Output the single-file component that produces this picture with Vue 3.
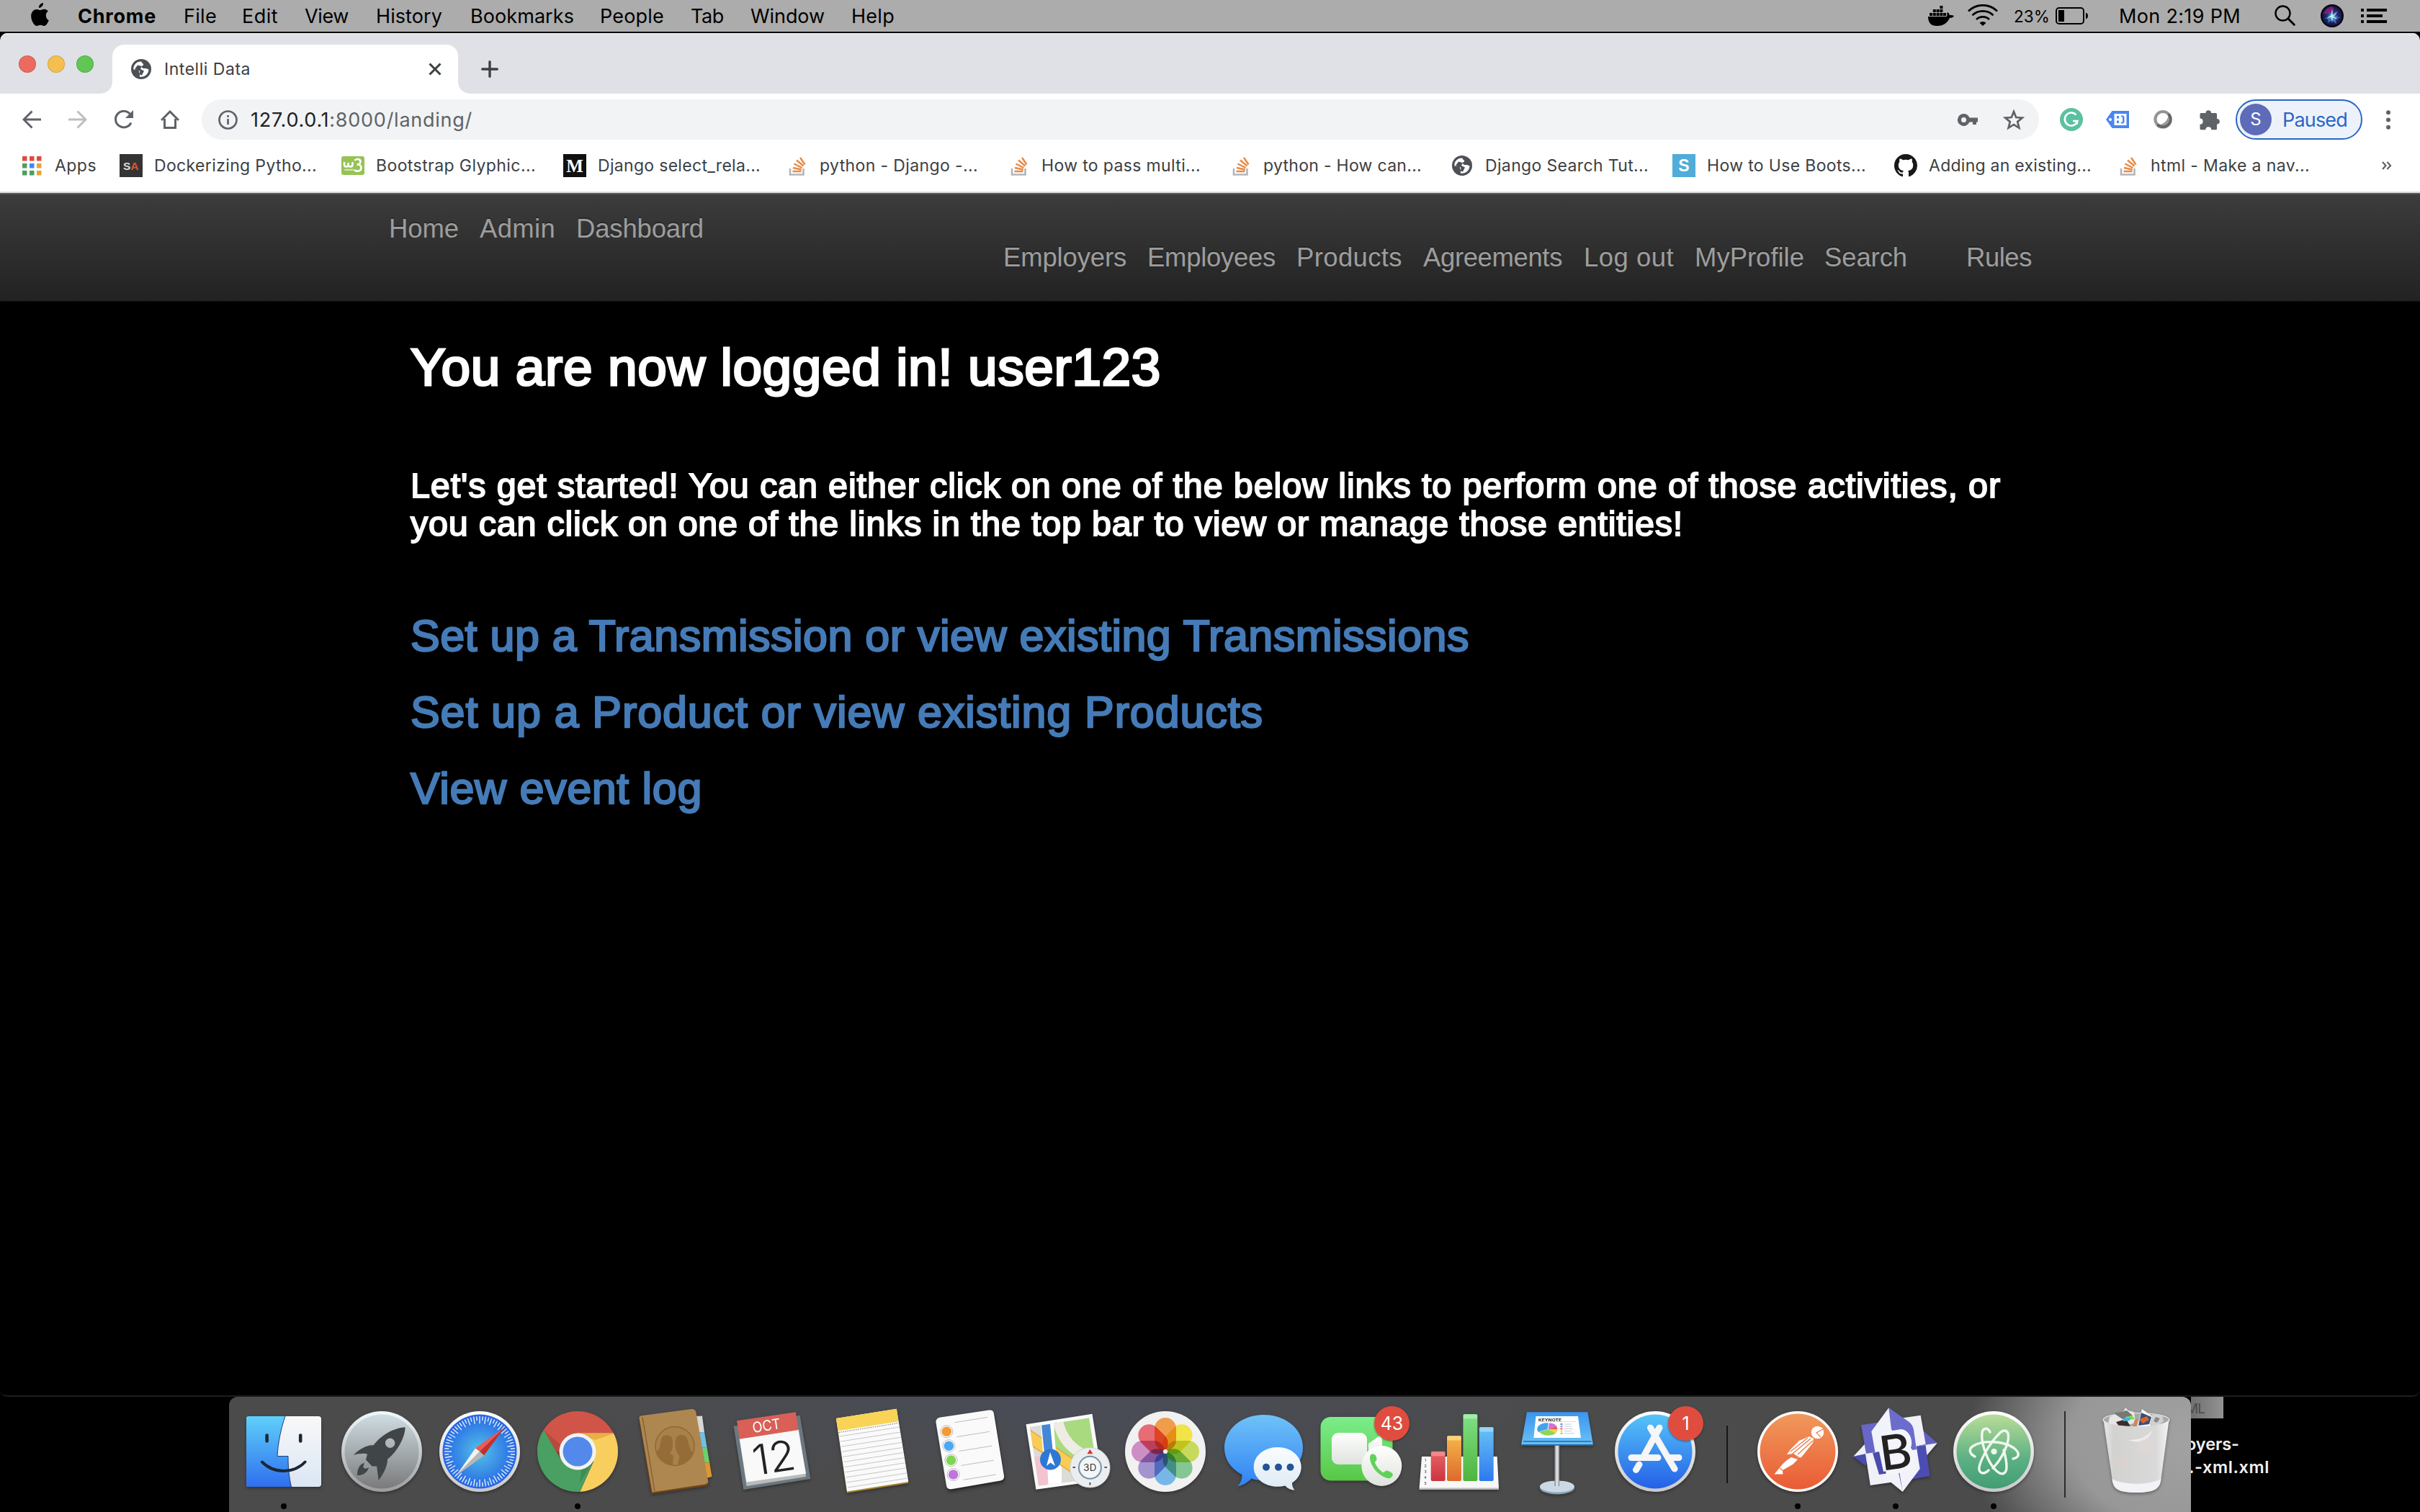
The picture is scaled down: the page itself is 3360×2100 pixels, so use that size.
<script setup>
// Tracks a label out (or in) so that it fills the given width.
const vFit = {
  mounted(el, { value }) {
    const natural = el.getBoundingClientRect().width
    const count = el.textContent.length
    el.style.letterSpacing = `${(value - natural) / count}px`
  }
}

const menus = [
  { label: 'Chrome', step: 147, width: 109, bold: true },
  { label: 'File', step: 81, width: 46 },
  { label: 'Edit', step: 87, width: 50 },
  { label: 'View', step: 99, width: 61 },
  { label: 'History', step: 131, width: 92 },
  { label: 'Bookmarks', step: 180, width: 144 },
  { label: 'People', step: 126, width: 89 },
  { label: 'Tab', step: 83, width: 46 },
  { label: 'Window', step: 140, width: 103 },
  { label: 'Help', step: 80, width: 60 }
]

const bookmarks = [
  { icon: 'sa', label: 'Dockerizing Pytho...', width: 226 },
  { icon: 'w3', label: 'Bootstrap Glyphic...', width: 222 },
  { icon: 'medium', label: 'Django select_rela...', width: 226 },
  { icon: 'so', label: 'python - Django -...', width: 220 },
  { icon: 'so', label: 'How to pass multi...', width: 221 },
  { icon: 'so', label: 'python - How can...', width: 220 },
  { icon: 'globe', label: 'Django Search Tut...', width: 227 },
  { icon: 's', label: 'How to Use Boots...', width: 221 },
  { icon: 'github', label: 'Adding an existing...', width: 226 },
  { icon: 'so', label: 'html - Make a nav...', width: 221 }
]

const leftLinks = [
  { label: 'Home', step: 126, width: 97 },
  { label: 'Admin', step: 134, width: 105 },
  { label: 'Dashboard', step: 180, width: 177 }
]
const rightLinks = [
  { label: 'Employers', step: 200, width: 171 },
  { label: 'Employees', step: 207, width: 178 },
  { label: 'Products', step: 176, width: 147 },
  { label: 'Agreements', step: 223, width: 193 },
  { label: 'Log out', step: 154, width: 125 },
  { label: 'MyProfile', step: 180, width: 152 },
  { label: 'Search', step: 197, width: 115 },
  { label: 'Rules', step: 100, width: 91 }
]

const ticks = Array.from({ length: 72 }, (_, i) => i * 5)
const petals = ['#f0963c', '#f2e23a', '#c5d84e', '#7cc48a', '#6db1e8', '#9c8ccc', '#c987c0', '#e8606a']
const reminders = ['#f39a35', '#4aa9f2', '#7fd651', '#bd76dc']
const ruled = [0, 1, 2, 3, 4, 5, 6, 7, 8, 9, 10]
const bars = [
  { x: 28.7, y: 67.7, fill: 'url(#barRed)', cap: '#f08a8a' },
  { x: 51, y: 46, fill: 'url(#barOrange)', cap: '#fbd07c' },
  { x: 73.4, y: 16, fill: 'url(#barGreen)', cap: '#a4ecaa' },
  { x: 95.7, y: 34, fill: 'url(#barBlue)', cap: '#93d6fa' }
]
</script>

<template>
  <div class="desktop">
    <header class="menubar">
      <svg class="apple" width="26" height="32" viewBox="0 0 26 32"><path d="M18 0c.3 3.600-2.600 7-6 7C11.600 3.600 14.600.4 18 0zM21.800 17c0-3.500 2.800-5.100 3-5.300-1.800-2.600-4.400-2.900-5.300-2.900-2.300-.2-4.400 1.300-5.600 1.300S11 8.800 9 8.900c-2.600 0-5.200 1.600-6.500 4C-.3 17.700 1.800 25 4.500 28.800 5.800 30.700 7.300 32 9.200 32c2-.1 2.700-1.200 5-1.200s3 1.200 5 1.200 3.300-1.900 4.600-3.800c1-1.400 1.500-2.800 1.900-4-.2-.1-3.900-1.600-3.900-7.200z"/></svg>
      <nav class="menus">
        <div v-for="m in menus" :key="m.label" :style="{ width: m.step + 'px' }">
          <span v-fit="m.width" :class="{ bold: m.bold }">{{ m.label }}</span>
        </div>
      </nav>
      <div class="status">
        <svg class="docker" width="36" height="28" viewBox="0 0 36 28"><path d="M0 15h25.500c1-.8 1.200-2.200.7-4.600l1.200-1.400c1.600 1.200 2.300 2.700 2.300 4.200 2-.5 4-.4 6.300.7-1 2-3.500 3-6 2.900C27 23.800 21.500 28 12.500 28 4 28 0 23.500 0 15zM2 10h4v4H2zM6.800 10h4v4h-4zM11.600 10h4v4h-4zM16.400 10h4v4h-4zM21 10h4v4h-4zM6.800 5h4v4h-4zM11.600 5h4v4h-4zM16.400 5h4v4h-4zM16.400 0h4v4h-4z"/></svg>
        <svg class="wifi" width="42" height="30" viewBox="0 0 42 30" fill="none" stroke="#000" stroke-width="2.800"><path d="M1 9.500a28.500 28.500 0 0 1 40 0M6.500 15.300a20.800 20.800 0 0 1 29 0M12 21a13 13 0 0 1 18 0"/><path d="M16.500 25.800a6.500 6.500 0 0 1 9 0L21 30z" fill="#000" stroke="none"/></svg>
        <span class="pct" v-fit="50">23%</span>
        <svg class="battery" width="46" height="24" viewBox="0 0 46 24"><rect x="1" y="1" width="38" height="22" rx="4" fill="none" stroke="#000" stroke-width="2"/><path d="M4 4h8v16H4zM42 7.500c4 1.500 4 7.500 0 9z"/></svg>
        <span class="clock" v-fit="169">Mon 2:19 PM</span>
        <svg class="search" width="30" height="30" viewBox="0 0 30 30" fill="none" stroke="#000"><circle cx="11.500" cy="11.500" r="10" stroke-width="2.400"/><path d="M18.800 18.800l8.500 8.500" stroke-width="3" stroke-linecap="round"/></svg>
        <svg class="siri" width="32" height="32" viewBox="0 0 32 32"><circle cx="16" cy="16" r="15" fill="url(#siriBg)" stroke="#05060c" stroke-width="2"/><path d="M4 13c2-6 7-9.500 12-10 4 3 2 7-1 10z" fill="#b0277f" opacity=".55"/><path d="M4 20c6-1 8-4 9-9 1 3 3 5 5 3 1-2 3-4 6-4-3 3-4 5-1 7 2 1 3 1 5 2-5 0-7 0-7 3 0 2 1 3 1 5-3-2-5-5-7-5-2 1-3 3-5 4 1-3 1-5-1-6z" fill="#3d9fc9" opacity=".7"/><path d="M16 6l1 9 6-4-5 5.500 6 5-7-3-1 7-1.500-7.500-5.500 1 5.500-4z" fill="#dff7ff" opacity=".85"/></svg>
        <svg class="list" width="36" height="20" viewBox="0 0 36 20"><path d="M0 0h4v4H0zM8 0h28v4H8zM0 8h4v4H0zM8 8h22v4H8zM0 16h4v4H0zM8 16h28v4H8z"/></svg>
      </div>
    </header>

    <main class="window">
      <div class="tabstrip">
        <div class="lights"><i class="red"></i><i class="yellow"></i><i class="green"></i></div>
        <div class="tab">
          <svg class="globe" width="28" height="28" viewBox="0 0 28 28"><circle cx="14" cy="14" r="14" fill="#4d5156"/><path d="M14.500 3.500C8 3 3 8 3.300 14.500c3 .2 5.500 0 7.200 1.200 1.200 1 .3 2.800 1.200 3.800 1.500 1.300-.2 3 .1 5 6.700 1.300 12.500-3.500 12.700-10-2.200-.8-3.200-2-5.200-1.500-2 .3-4.600-.6-4.400-2.600.2-1.600 2.300-1.200 2.300-2.900-.1-1.700-2.700-1.500-2.700-4z" fill="#fff"/><path d="M9 8.500l6 1.500-2 4 5 2.500-3 6-3-1 .3-5L5 14z" fill="#4d5156"/></svg>
          <span v-fit="120" class="tab-title">Intelli Data</span>
          <svg width="18" height="18" viewBox="0 0 18 18" stroke="#3c4043" stroke-width="3"><path d="M1.500 1.500l15 15M16.500 1.500l-15 15"/></svg>
        </div>
        <svg class="plus" width="24" height="24" viewBox="0 0 24 24" stroke="#3c4043" stroke-width="3.400" stroke-linecap="round"><path d="M12 1.700v20.600M1.700 12h20.600"/></svg>
      </div>

      <div class="toolbar">
        <svg class="navi" width="26" height="26" viewBox="0 0 26 26" fill="none" stroke="#5f6368" stroke-width="3"><path d="M13.500 1.500L2 13l11.500 11.500M2 13h24"/></svg>
        <svg class="navi" width="26" height="26" viewBox="0 0 26 26" fill="none" stroke="#bcbec1" stroke-width="3"><path d="M12.500 1.500L24 13 12.500 24.500M24 13H0"/></svg>
        <svg class="navi" width="26" height="26" viewBox="0 0 26 26"><path d="M23 17.500A11.300 11.300 0 1 1 22 6" fill="none" stroke="#5f6368" stroke-width="3"/><path d="M26 0v11H15z" fill="#5f6368"/></svg>
        <svg class="navi" width="26" height="26" viewBox="0 0 26 26" fill="none" stroke="#5f6368" stroke-width="3"><path d="M1 14L13 2l12 12M5.500 12v12.500h15V12"/></svg>
        <div class="omnibox">
          <svg width="27" height="27" viewBox="0 0 27 27"><circle cx="13.500" cy="13.500" r="12" fill="none" stroke="#5f6368" stroke-width="2.700"/><path d="M12.200 12h2.700v8h-2.700zM12.200 7h2.700v2.800h-2.700z" fill="#5f6368"/></svg>
          <span v-fit="308" class="url"><b>127.0.0.1</b>:8000/landing/</span>
          <svg class="key" width="29" height="17" viewBox="0 0 29 17"><path fill-rule="evenodd" d="M8.500 0a8.500 8.500 0 0 1 7.900 5.500H28v6h-2V15h-5v-3.500h-4.600A8.500 8.500 0 1 1 8.500 0zm0 5a3.500 3.500 0 1 0 0 7 3.500 3.500 0 0 0 0-7z" fill="#5f6368"/></svg>
          <svg class="star" width="30" height="29" viewBox="0 0 30 29"><path d="M15 3l3.200 8 8.700.6-6.700 5.500 2.200 8.500L15 21l-7.400 4.600 2.200-8.500-6.700-5.500 8.700-.6z" fill="none" stroke="#5f6368" stroke-width="2.700"/></svg>
        </div>
        <div class="extensions">
          <svg width="32" height="32" viewBox="0 0 32 32"><circle cx="16" cy="16" r="16" fill="#5bc1a0"/><path d="M22.500 9.500A9 9 0 1 0 24.500 18H18" fill="none" stroke="#fff" stroke-width="2.600"/><path d="M18.500 17H25v6.500z" fill="#fff"/></svg>
          <svg class="tag" width="32" height="24" viewBox="0 0 32 24"><path d="M0 12L8.500 0H32v24H8.500z" fill="#4a86f0"/><circle cx="6" cy="12" r="2" fill="#fff"/><path d="M11.500 4h17v16h-17z" fill="#fff"/><path d="M15 7h3v3.500h-3zM15 13.500h3V17h-3zM21 6.500h3l1.500 2v7l-1.500 2h-3v-2h2v-7h-2z" fill="#4a86f0"/></svg>
          <svg class="ring" width="28" height="28" viewBox="0 0 28 28"><circle cx="14" cy="14.500" r="13" fill="#ddd"/><circle cx="14" cy="13.500" r="12.500" fill="#949494"/><path d="M23 5a12.500 12.500 0 0 1-18 17.500z" fill="#666"/><circle cx="14" cy="13.500" r="8.500" fill="#fff"/><path d="M21.500 9.500a8.500 8.500 0 0 1-11.500 11.500c6-1.500 10-5.500 11.500-11.500z" fill="#999"/></svg>
          <svg class="puzzle" width="29" height="29" viewBox="0 0 29 29"><path d="M8.500 5a3.800 3.800 0 0 1 7.600 0h6.400a1.500 1.500 0 0 1 1.500 1.500v6.400a3.800 3.800 0 0 1 0 7.600v6.300a1.500 1.500 0 0 1-1.500 1.500h-6.200a4 4 0 0 0-8 0H2a1.500 1.500 0 0 1-1.500-1.500v-6a4.100 4.100 0 0 0 0-8.200V6.500A1.500 1.500 0 0 1 2 5z" fill="#5f6368"/></svg>
        </div>
        <div class="profile"><span class="avatar">S</span><span v-fit="90">Paused</span></div>
        <svg width="6" height="27" viewBox="0 0 6 27" fill="#5f6368"><circle cx="3" cy="3.200" r="3"/><circle cx="3" cy="13.500" r="3"/><circle cx="3" cy="23.800" r="3"/></svg>
      </div>

      <div class="bookmarks">
        <div class="apps">
          <svg width="27" height="27" viewBox="0 0 27 27"><path d="M0 0h6.500v6.500H0zM10 0h6.500v6.500H10zM20 0h6.500v6.500H20z" fill="#df4a3e"/><path d="M0 10h6.500v6.500H0zM0 20h6.500v6.500H0zM10 20h6.500v6.500H10z" fill="#4f9e5f"/><path d="M10 10h6.500v6.500H10z" fill="#4285f4"/><path d="M20 10h6.500v6.500H20zM20 20h6.500v6.500H20z" fill="#e3a63a"/></svg>
          <span v-fit="58">Apps</span>
        </div>
        <div v-for="(b, i) in bookmarks" :key="i" class="bookmark">
          <svg v-if="b.icon === 'sa'" width="32" height="32" viewBox="0 0 32 32"><path d="M0 0h32v32H0z" fill="#343434"/><text x="5" y="21.500" font-family="Liberation Sans" font-weight="700" font-size="15.500" fill="#ddd">S<tspan fill="#e0562b">A</tspan></text></svg>
          <svg v-else-if="b.icon === 'w3'" width="32" height="32" viewBox="0 0 32 32"><rect y="3" width="32" height="26" rx="3" fill="#96c354"/><path d="M4 11v3.500c0 4 5.500 4 5.500 0V12v2.500c0 4 6 4 6 0V11M18.500 9c2-3 8-2.500 8 1.500 0 3-3 4-5 4 3 0 6 1 6 4.500 0 5-6.500 6-9.500 3" fill="none" stroke="#fff" stroke-width="2.600"/><text x="4" y="23" font-family="Inter" font-weight="600" font-size="3.500" fill="#fff">schools</text></svg>
          <svg v-else-if="b.icon === 'medium'" width="32" height="32" viewBox="0 0 32 32"><path d="M0 0h32v32H0z" fill="#12100e"/><text x="16" y="24.500" text-anchor="middle" font-family="Liberation Serif" font-weight="700" font-size="25" fill="#fff">M</text></svg>
          <svg v-else-if="b.icon === 'so'" width="32" height="32" viewBox="0 0 32 32"><path d="M7 20v8.500h18.500V20" fill="none" stroke="#b2b5b9" stroke-width="2.600"/><path d="M10.500 24h12M11 19l11.800 2.500M12.500 13.500L23.500 19M16 8.500l9.500 8M21 5l6.500 9.500" stroke="#e78a46" stroke-width="2.500"/></svg>
          <svg v-else-if="b.icon === 'globe'" width="32" height="32" viewBox="-2 -2 32 32"><circle cx="14" cy="14" r="14" fill="#4d5156"/><path d="M14.500 3.500C8 3 3 8 3.300 14.500c3 .2 5.500 0 7.200 1.200 1.200 1 .3 2.800 1.200 3.800 1.500 1.300-.2 3 .1 5 6.700 1.300 12.500-3.500 12.700-10-2.200-.8-3.200-2-5.200-1.500-2 .3-4.600-.6-4.400-2.600.2-1.600 2.300-1.200 2.300-2.900-.1-1.700-2.700-1.500-2.700-4z" fill="#fff"/><path d="M9 8.500l6 1.500-2 4 5 2.500-3 6-3-1 .3-5L5 14z" fill="#4d5156"/></svg>
          <svg v-else-if="b.icon === 's'" width="32" height="32" viewBox="0 0 32 32"><path d="M0 0h32v32H0z" fill="#50acd8"/><text x="16" y="24" text-anchor="middle" font-family="Liberation Sans" font-weight="700" font-size="23" fill="#fff">S</text></svg>
          <svg v-else width="32" height="32" viewBox="0 0 16 16"><path d="M8 0C3.580 0 0 3.580 0 8c0 3.540 2.290 6.530 5.470 7.590.4.070.55-.17.55-.38 0-.19-.01-.82-.01-1.490-2.010.37-2.530-.49-2.690-.94-.09-.23-.48-.94-.82-1.130-.28-.15-.68-.52-.01-.53.63-.01 1.080.58 1.230.82.72 1.210 1.870.87 2.330.66.070-.52.28-.87.51-1.070-1.780-.2-3.640-.89-3.640-3.950 0-.87.31-1.590.82-2.150-.08-.2-.36-1.020.08-2.120 0 0 .67-.21 2.200.82.64-.18 1.320-.27 2-.27s1.360.09 2 .27c1.530-1.040 2.200-.82 2.200-.82.44 1.100.16 1.920.08 2.120.51.56.82 1.270.82 2.150 0 3.070-1.870 3.750-3.650 3.950.29.25.54.73.54 1.480 0 1.070-.01 1.930-.01 2.200 0 .21.15.46.55.38A8.010 8.010 0 0 0 16 8c0-4.420-3.580-8-8-8z" fill="#191717"/></svg>
          <span v-fit="b.width">{{ b.label }}</span>
        </div>
        <svg class="more" width="14" height="12" viewBox="0 0 14 12" fill="none" stroke="#5f6368" stroke-width="2.200"><path d="M1 1l4.500 5L1 11M7.500 1L12 6l-4.500 5"/></svg>
      </div>

      <nav class="navbar">
        <div class="links left">
          <div v-for="l in leftLinks" :key="l.label" :style="{ width: l.step + 'px' }"><a v-fit="l.width">{{ l.label }}</a></div>
        </div>
        <div class="links right">
          <div v-for="l in rightLinks" :key="l.label" :style="{ width: l.step + 'px' }"><a v-fit="l.width">{{ l.label }}</a></div>
        </div>
      </nav>

      <section class="page">
        <h1><span v-fit="1042">You are now logged in! user123</span></h1>
        <h4>
          <span v-fit="2208">Let's get started! You can either click on one of the below links to perform one of those activities, or</span>
          <span v-fit="1767">you can click on one of the links in the top bar to view or manage those entities!</span>
        </h4>
        <div class="actions">
          <a v-fit="1470">Set up a Transmission or view existing Transmissions</a>
          <a v-fit="1184">Set up a Product or view existing Products</a>
          <a v-fit="405">View event log</a>
        </div>
      </section>
    </main>

    <footer class="bottom">
      <div class="dock">
        <!-- Finder -->
        <div class="app running">
          <svg viewBox="0 0 136 136">
            <defs>
              <linearGradient id="finderL" x2="0" y2="1"><stop stop-color="#5fd0fa"/><stop offset="1" stop-color="#2f6fee"/></linearGradient>
              <linearGradient id="finderR" x2="0" y2="1"><stop stop-color="#f8f8f9"/><stop offset="1" stop-color="#dbe6f4"/></linearGradient>
            </defs>
            <rect x="16" y="19" width="104" height="98" rx="4" fill="url(#finderR)"/>
            <path d="M20 19h50C64 36 60 56 59 74.500h15c0 14 1 28 4.500 42.500H20a4 4 0 0 1-4-4V23a4 4 0 0 1 4-4z" fill="url(#finderL)"/>
            <path d="M70 19C64 36 60 56 59 74.500h15c0 14 1 28 4.500 42.500" fill="none" stroke="#1c3f7a" stroke-width="1"/>
            <path d="M44.600 45.500v8M91.200 45.500v8" stroke="#1b2734" stroke-width="4.600" stroke-linecap="round"/>
            <path d="M38 82.500c16 16.500 44 16.500 59.500 0" fill="none" stroke="#1b2734" stroke-width="4" stroke-linecap="round"/>
          </svg>
        </div>
        <!-- Launchpad -->
        <div class="app">
          <svg viewBox="0 0 136 136">
            <defs>
              <linearGradient id="lpRim" x2="0" y2="1"><stop stop-color="#eff9fc"/><stop offset="1" stop-color="#9b9d9f"/></linearGradient>
              <linearGradient id="lpBg" x2="0" y2="1"><stop stop-color="#cfdde3"/><stop offset="1" stop-color="#7a7a7b"/></linearGradient>
            </defs>
            <circle cx="68" cy="68" r="56" fill="url(#lpRim)"/><circle cx="68" cy="68" r="51.500" fill="url(#lpBg)"/>
            <path fill-rule="evenodd" d="M100.600 34.300C88 35 70 42 56.500 59.300c-8-1-20 5-27.800 13.700 7-2.500 16-3 19.300-1.500l-2 8 8.600 9h6.500l2.500 19.500c6-8 12-18 12.500-29.300C90 68 100.500 48 100.600 34.300zM79.600 49.500a6.700 6.700 0 1 0 0 13.400 6.700 6.700 0 0 0 0-13.400zM44 84c-7 1-10 9-10 17 7 .5 14-3 16-11l-4 2-4-2z" fill="#404548"/>
          </svg>
        </div>
        <!-- Safari -->
        <div class="app">
          <svg viewBox="0 0 136 136">
            <defs>
              <linearGradient id="safRim" x2="0" y2="1"><stop stop-color="#fff"/><stop offset="1" stop-color="#c9c9cb"/></linearGradient>
              <radialGradient id="safBg"><stop stop-color="#55c2e6"/><stop offset="1" stop-color="#2566e6"/></radialGradient>
            </defs>
            <circle cx="68" cy="68" r="56" fill="url(#safRim)"/><circle cx="68" cy="68" r="51.500" fill="url(#safBg)"/>
            <path v-for="t in ticks" :key="t" :d="t % 10 ? 'M68 19v6' : 'M68 19v10'" :transform="`rotate(${t} 68 68)`" stroke="#e6f0fb" stroke-width="1.400"/>
            <path d="M103 34L62 63.500l6 4.500z" fill="#f1584f"/><path d="M103 34L74 73.500 68 68z" fill="#c4302a"/>
            <path d="M35 102l27-38.500 6 4.500z" fill="#f2f2f2"/><path d="M35 102l39-28.500-6-5.500z" fill="#b7b7b7"/>
          </svg>
        </div>
        <!-- Chrome -->
        <div class="app running">
          <svg viewBox="0 0 136 136">
            <clipPath id="chromeClip"><circle cx="68" cy="68" r="56"/></clipPath>
            <g clip-path="url(#chromeClip)">
              <path d="M0 0h136v68H0z" fill="#d05548"/>
              <path d="M21.500 38.700L0 60v76h66l24-55-22 10-22-11z" fill="#4a9f62"/>
              <path d="M68 42.500h70V136H66l24-54z" fill="#f8cf5f"/>
              <path d="M68 42.500h52L92 52z" fill="#dfa33e" opacity=".7"/><path d="M21.500 38.700L44 79l1-20z" fill="#ad3f37" opacity=".6"/><path d="M88 84l-15 10-2 18z" fill="#35804b" opacity=".6"/>
            </g>
            <circle cx="68" cy="68" r="25.500" fill="#f3f3f3"/><circle cx="68" cy="68" r="20.500" fill="#5389ea"/>
          </svg>
        </div>
        <!-- Contacts -->
        <div class="app">
          <svg viewBox="0 0 136 136">
            <path d="M96 19l9-.5 3 23h-9z" fill="#d7d7d7"/><path d="M99 42l9-1 3.500 21-10 1z" fill="#6fc1e8"/><path d="M101 63l10.500-1L115 83l-10 1z" fill="#6ad26d"/><path d="M105 84l10-1 3.500 20-9 2z" fill="#e0982b"/>
            <path d="M17.500 23l17 104 76-11c3-1 4-4 3-7z" fill="#6f4518"/>
            <path d="M17.500 21.500c0-2 1-2.800 3-3.200L90 9c4-.5 6 2 6.500 5l16.500 94c.5 3-1 5-4 5.500l-73.500 11z" fill="#ae8750"/>
            <path d="M22 20l17 103" stroke="#8a622f" stroke-width="1.500"/>
            <ellipse cx="67" cy="60.500" rx="27" ry="27" fill="#a88049" stroke="#8d6736" stroke-width="1.500"/>
            <path d="M50 47c8-4 14-1 14 7 0 9 0 13-4 16l5 4-1 13C52 86 43 78 42 67c6-2 3-12 8-20zM70 47c7-4 13-2 15 6l3 12c2 3 4 3 4 5-2 8-9 15-20 17-2-8 5-10-1-16-4-6-5-18-1-24z" fill="#956c37"/>
          </svg>
        </div>
        <!-- Calendar -->
        <div class="app">
          <svg viewBox="0 0 136 136">
            <path d="M12.600 32.700l92-15L119.300 106l-93 15z" fill="#6b7880"/>
            <path d="M20.700 50L30.500 116 113 103l-10-66z" fill="#b9babb"/>
            <path d="M20.700 50L30.500 110.500 113 98.700 102.400 38z" fill="#f9f9f9"/>
            <path d="M17 25.300l81.800-12L102.400 38l-81.700 12.700z" fill="#d96057"/>
            <g transform="rotate(-8.500 68 68)" font-family="Inter">
              <text x="44" y="38" font-size="20" textLength="39" lengthAdjust="spacingAndGlyphs" fill="#fff">OCT</text>
              <text x="37" y="97" font-size="58" font-weight="300" textLength="60" lengthAdjust="spacingAndGlyphs" fill="#222">12</text>
            </g>
          </svg>
        </div>
        <!-- Notes -->
        <div class="app">
          <svg viewBox="0 0 136 136">
            <path d="M18.900 22l83.900-13.300L119.300 112l-85.300 13.500z" fill="#a8862c"/>
            <path d="M18.900 22l83.900-13.300L119.300 110l-85.300 13.500z" fill="#fafafa"/>
            <path d="M18.900 22l83.900-13.300 2.700 17.600L21.700 39.300z" fill="#f8d355"/>
            <path d="M22.500 41.500l83-13" stroke="#8d8d8d" stroke-width="1.300" stroke-dasharray="1.500 1.500"/>
            <path v-for="r in ruled" :key="r" :d="`M${23.500 + r * 1.150} ${47 + r * 7.100}l83.500-13`" stroke="#bfbfbf" stroke-width=".9"/>
          </svg>
        </div>
        <!-- Reminders -->
        <div class="app">
          <svg viewBox="0 0 136 136">
            <path d="M28 20.500l67-10c4-.6 6.500 1 7 5l14 86c.6 4-1 6.500-5 7l-68 11.700c-4 .5-6.500-1-7-5L21.500 28c-.5-4 2-7 6.500-7.500z" fill="#2a2a2a" transform="translate(1 2)"/>
            <path d="M28 20.500l67-10c4-.6 6.500 1 7 5l14 86c.6 4-1 6.500-5 7l-68 11.700c-4 .5-6.500-1-7-5L21.500 28c-.5-4 2-7 6.500-7.500z" fill="#fafafa"/>
            <g v-for="(c, i) in reminders" :key="c"><circle :cx="36.300 + i * 3.100" :cy="40.300 + i * 19.900" r="8.500" fill="#fff" stroke="#b9b9b9"/><circle :cx="36.300 + i * 3.100" :cy="40.300 + i * 19.900" r="6.800" :fill="c"/></g>
            <path v-for="i in 5" :key="i" :d="`M${44.500 + i * 3} ${7.800 + i * 19.900}l45.500-7.300`" stroke="#bdbdbd"/>
          </svg>
        </div>
        <!-- Maps -->
        <div class="app">
          <svg viewBox="0 0 136 136">
            <clipPath id="mapClip"><path d="M16 34l82-12.500 13 84-83 10z"/></clipPath>
            <path d="M10.500 30.300l92-14.600L117 108l-92.600 12.700z" fill="#fafafa"/>
            <g clip-path="url(#mapClip)">
              <path d="M0 0h136v136H0z" fill="#dcdbd5"/>
              <path d="M50 10h70v80H70L50 60z" fill="#a9da80"/>
              <path d="M54 20c4 30 22 52 60 60" fill="none" stroke="#efece4" stroke-width="14"/>
              <path d="M10 75h36v50H10z" fill="#f3c4d0"/><path d="M40 84h20v40H42z" fill="#fff"/>
              <path d="M10 44l105 71" stroke="#e8a93a" stroke-width="18"/><path d="M10 44l105 71" stroke="#f9cd55" stroke-width="15"/>
              <path d="M39 20l5 60" stroke="#fff" stroke-width="18"/><path d="M37 20l6 60" stroke="#4587d6" stroke-width="12"/>
            </g>
            <circle cx="44.500" cy="79" r="14.500" fill="#2d78d6"/><path d="M44 69l7 19-6.500-4.500L39 88z" fill="#fff"/>
            <circle cx="99.400" cy="90.300" r="27.800" fill="#ecedef" stroke="#bfc3c8" stroke-width=".8"/><circle cx="99.400" cy="90.300" r="15.500" fill="#f4f5f6" stroke="#6f93ab" stroke-width="2"/>
            <path d="M99.400 65l4 6.300h-8z" fill="#de3428"/><path d="M75.500 90h3.500M119.500 90h3.500M99.400 111v3.500" stroke="#222" stroke-width="1.500"/>
            <text x="99.400" y="95" text-anchor="middle" font-family="Inter" font-size="13.500" fill="#333">3D</text>
          </svg>
        </div>
        <!-- Photos -->
        <div class="app">
          <svg viewBox="0 0 136 136">
            <circle cx="68" cy="68" r="56" fill="#f1f1f2"/>
            <g class="petals"><rect v-for="(p, i) in petals" :key="p" class="petal" x="53" y="21" width="30" height="46" rx="15" :fill="p" :transform="`rotate(${i * 45} 68 68)`"/></g>
            <circle cx="68" cy="68" r="3" fill="#f4f4f4"/>
          </svg>
        </div>
        <!-- Messages -->
        <div class="app">
          <svg viewBox="0 0 136 136">
            <defs>
              <linearGradient id="msg" x2="0" y2="1"><stop stop-color="#70c2f8"/><stop offset="1" stop-color="#2f83f3"/></linearGradient>
              <linearGradient id="msg2" x2="0" y2="1"><stop stop-color="#fafdff"/><stop offset="1" stop-color="#dce9f3"/></linearGradient>
            </defs>
            <path d="M68.500 17C99 17 123 37 123 62.500S99 108 68.500 108c-7 0-12-.5-17-2.500-6 6-12 9.500-20 11 5-4 7-9 7-16.500C23 92 14 79 14 62.500 14 37 38 17 68.500 17z" fill="url(#msg)"/>
            <path d="M87.700 62c18.500 0 33 12 33 27.500 0 9-4.700 17-12.700 22 0 4 1 7 3.500 10-6 0-10-2.500-13-6-3.500 1-7 1.300-10.800 1.300-18.500 0-33-12-33-27.300S69.200 62 87.700 62z" fill="url(#msg2)"/>
            <circle cx="72" cy="89.700" r="5" fill="#245496"/><circle cx="89" cy="89.700" r="5" fill="#245496"/><circle cx="105.500" cy="89.700" r="5" fill="#245496"/>
          </svg>
        </div>
        <!-- FaceTime -->
        <div class="app">
          <svg viewBox="0 0 136 136">
            <defs>
              <linearGradient id="ft" x2="0" y2="1"><stop stop-color="#7bee8b"/><stop offset="1" stop-color="#58c746"/></linearGradient>
              <linearGradient id="white" x2="0" y2="1"><stop stop-color="#fff"/><stop offset="1" stop-color="#dfe2dc"/></linearGradient>
            </defs>
            <rect x="11.500" y="20" width="100" height="88.500" rx="14" fill="url(#ft)"/>
            <rect x="27" y="42" width="49" height="44" rx="9" fill="url(#white)"/><path d="M78 57l17-12h2v40L78 74z" fill="url(#white)"/>
            <circle cx="96.300" cy="88" r="28" fill="url(#white)"/>
            <path d="M82 72c4-1.500 6.500.5 7.500 6 .5 3-3 4-2.500 5.500 2.500 6 6 10 11 13.500 2 1 3-3 5.500-2.500 4.500 1 8.500 3.500 8.500 5.500-1 4-4 6-8 5-13-4-22-15-24-27-.3-3 .5-5 2-6z" fill="#62d15c"/>
          </svg>
          <b class="badge">43</b>
        </div>
        <!-- Numbers -->
        <div class="app">
          <svg viewBox="0 0 136 136">
            <defs>
              <linearGradient id="barRed" x2="0" y2="1"><stop stop-color="#e86464"/><stop offset="1" stop-color="#cb3440"/></linearGradient>
              <linearGradient id="barOrange" x2="0" y2="1"><stop stop-color="#f6b64a"/><stop offset="1" stop-color="#dd6a2c"/></linearGradient>
              <linearGradient id="barGreen" x2="0" y2="1"><stop stop-color="#7fe086"/><stop offset="1" stop-color="#4fb43c"/></linearGradient>
              <linearGradient id="barBlue" x2="0" y2="1"><stop stop-color="#69c3f5"/><stop offset="1" stop-color="#2d79ee"/></linearGradient>
            </defs>
            <path d="M16 75h104.700l2.300 44H12.600z" fill="#f8f8f8"/><path d="M12.600 118.500H123v2.500H12.600z" fill="#bcbcbc"/>
            <text v-for="i in 5" :key="i" x="21" :y="74.500 + i * 7.800" text-anchor="middle" font-family="Inter" font-weight="600" font-size="5" fill="#555">{{ i }}</text>
            <g v-for="b in bars" :key="b.x"><rect :x="b.x" :y="b.y" width="20" :height="109 - b.y" rx="2" :fill="b.fill"/><rect :x="b.x + 0.500" :y="b.y + 0.500" width="19" height="6" rx="1.500" :fill="b.cap"/></g>
          </svg>
        </div>
        <!-- Keynote -->
        <div class="app">
          <svg viewBox="0 0 136 136">
            <defs>
              <linearGradient id="kn" x2="0" y2="1"><stop stop-color="#3a95f0"/><stop offset="1" stop-color="#6ac2f7"/></linearGradient>
              <linearGradient id="pole"><stop stop-color="#7e8287"/><stop offset=".5" stop-color="#f0f2f4"/><stop offset="1" stop-color="#85898e"/></linearGradient>
            </defs>
            <ellipse cx="68" cy="118.500" rx="24" ry="9" fill="#8ba3b8"/><ellipse cx="68" cy="116.500" rx="24" ry="8" fill="#cbd9e6"/>
            <path d="M64.400 58h6.800v58h-6.800z" fill="url(#pole)"/>
            <path d="M26 13.300h84.400l7.600 46H18z" fill="url(#kn)"/><path d="M21 54h94.500" stroke="#2a66a0" stroke-width="1.500"/><path d="M18 58h100v1.800H18z" fill="#2966a8"/>
            <path d="M38.500 19H97l4 30H35.400z" fill="#fff"/>
            <text x="42" y="25.500" font-family="Inter" font-weight="700" font-size="5" textLength="32" lengthAdjust="spacingAndGlyphs" fill="#222">KEYNOTE</text>
            <path d="M41.500 26.500H94" stroke="#ccc" stroke-width=".6"/>
            <path d="M54.500 37L42 41a13 8.500 0 0 1 14-12.500z" fill="#45a3ec"/><path d="M55.500 37l1.500-8.500c5 0 8.500 2 10 4z" fill="#c973e0"/><path d="M55.500 37l11.500-4.500 1.500 4.500z" fill="#ee5c52"/><path d="M55.500 37h13c0 2-1 4-2.500 5.500z" fill="#f8ce4c"/><path d="M55.500 37L66 42.500c-6 5-18 4-23-1.500z" fill="#8ed65b"/>
            <path d="M72.500 29h3v2h-3z" fill="#4595e4"/><path d="M72.500 32.200h3v2h-3z" fill="#c973e0"/><path d="M72.500 35.400h3v2h-3z" fill="#ee5c52"/><path d="M72.500 38.600h3v2h-3z" fill="#f8ce4c"/><path d="M72.500 41.800h3v2h-3z" fill="#8ed65b"/>
            <path d="M78 30h10M78 33.200h10M78 36.400h12M78 39.600h10M78 42.800h14" stroke="#c4cbd2"/>
          </svg>
        </div>
        <!-- App Store -->
        <div class="app">
          <svg viewBox="0 0 136 136">
            <linearGradient id="as" x2="0" y2="1"><stop stop-color="#55c4f8"/><stop offset="1" stop-color="#2460e8"/></linearGradient>
            <circle cx="68" cy="68" r="56" fill="url(#safRim)"/><circle cx="68" cy="68" r="51.500" fill="url(#as)"/>
            <path d="M74 35L52 75M46 86l-4.500 7.500M61.500 35L95 92M35 76.500h37M88 76.500h13" stroke="#f6f6f7" stroke-width="9" stroke-linecap="round"/>
          </svg>
          <b class="badge">1</b>
        </div>
        <div class="divider short"><i></i></div>
        <!-- Postman -->
        <div class="app running">
          <svg viewBox="0 0 136 136">
            <linearGradient id="pm" x2="0" y2="1"><stop stop-color="#f0995b"/><stop offset="1" stop-color="#ea5b35"/></linearGradient>
            <circle cx="68" cy="68" r="56" fill="#fff"/><circle cx="68" cy="68" r="52.500" fill="url(#pm)"/>
            <circle cx="95.500" cy="41.500" r="8.700" fill="#fff"/><path d="M103 37l-9 5 6 6" fill="none" stroke="#ed7a48" stroke-width="1.200"/>
            <path d="M84 47l6 3-1 6-16 20-4 1-7-6-9 1 5-7 12-12z" fill="#fff"/><path d="M59 76l9 3-7 7-14 8 .5 5.500H35.500l6.500-8c4-6 10-11 17-15.500z" fill="#fff"/>
            <path d="M86 50L61 71l10 6M82 49L58 68M89 53L68 72M43 91l5 4" fill="none" stroke="#ed7a48" stroke-width="1.300"/>
          </svg>
        </div>
        <!-- BBEdit -->
        <div class="app running">
          <svg viewBox="0 0 136 136">
            <path d="M9.300 74.700L58 22l-10 60z" fill="#eeeef6"/><path d="M9.300 74.700L32 70l-6 18z" fill="#4a4bae"/>
            <path d="M125.700 56.300L80 110l8-70z" fill="#eeeef6"/><path d="M125.700 56.300L88 62l15-26z" fill="#5f60c0"/>
            <path d="M20 31.300l38-6 8 43-39 3z" fill="#6667c6"/><path d="M66 23l36.700-5.300 7 40-38 8z" fill="#f0f0f8"/>
            <path d="M26 71l36-5 12 43-41.200 6z" fill="#f0f0f8"/><path d="M74 64l35.500-5 6 43-40 7z" fill="#4c4db2"/>
            <path d="M58.300 7.300l34.200 26.200 9.200 58.500-24 32L44.500 97 34.300 40z" fill="#f2f2fa"/>
            <path d="M58.300 7.300L84 25c9 6 9 12 10 20l3 20-12 2-23-30z" fill="#6b6ccb"/><path d="M77.700 124L73 96l-28 4-9-30 9-2 6 28 20-4z" fill="#4a4bae"/>
            <path d="M47 42l28-5c12 0 18 16 14 26 8 8 8 28-6 33l-28 5z" fill="#f4f4fb"/>
            <text x="68" y="92" text-anchor="middle" transform="rotate(-8 68 68)" font-family="Inter" font-weight="500" font-size="66" textLength="44" lengthAdjust="spacingAndGlyphs" fill="#222">B</text>
          </svg>
        </div>
        <!-- Atom -->
        <div class="app running">
          <svg viewBox="0 0 136 136">
            <linearGradient id="atom" x2="0" y2="1"><stop stop-color="#b9dd98"/><stop offset=".6" stop-color="#5cb083"/><stop offset="1" stop-color="#429c74"/></linearGradient>
            <circle cx="68" cy="68" r="56" fill="url(#safRim)"/><circle cx="68" cy="68" r="51.500" fill="url(#atom)"/>
            <g fill="none" stroke="#f0f8ef" stroke-width="3.400" stroke-linecap="round">
              <path d="M42 75c-8-4-9-11-2-15 13-8 42-7 56 3 9 7 8 13-1 15"/>
              <path d="M63 41c-3-7-10-6-11 1-2 14 8 42 20 53 8 7 14 4 14-6 0-9-2-16-4-23"/>
              <path d="M75 44c5-6 11-7 13-1 3 11-8 35-21 48"/>
              <path d="M75 44C63 56 50 78 48 90c-1 8 6 11 13 4"/>
            </g>
            <circle cx="68.500" cy="68" r="4" fill="#f0f8ef"/>
          </svg>
        </div>
        <div class="divider tall"><i></i></div>
        <!-- Trash -->
        <div class="app">
          <svg viewBox="0 0 136 136">
            <linearGradient id="bin"><stop stop-color="#e9e9e9"/><stop offset=".15" stop-color="#d2d2d1"/><stop offset=".8" stop-color="#d9d9d9"/><stop offset="1" stop-color="#f4f4f4"/></linearGradient>
            <ellipse cx="68" cy="24" rx="46" ry="9.500" fill="#a9a9a9" stroke="#f0f0f0" stroke-width="1.200"/>
            <path d="M31 20l20-9 2-4 4 4 8 2 2 15-20 6-18-4z" fill="#e6e6e6"/><path d="M37 15l18-4 8 7-14 5z" fill="#777"/><path d="M40 27l14-4 6 10H44z" fill="#3a2d2a"/><path d="M53 20l9-2 4 5-12 1z" fill="#7ed84b"/><path d="M50 22l10-1-1 4-9 1z" fill="#37b7e8"/>
            <path d="M76 9l17 12-6 13H69z" fill="#fafafa"/><path d="M75 14l14 6-3 10-15 2z" fill="#33507f"/><path d="M72 23l11-4 3 5-9 5z" fill="#d9642a"/><path d="M66 24l4-2-2 12-5-1z" fill="#c85"/><path d="M91 16l13 1 2 9-11 8-9-4z" fill="#d0d0d0"/><path d="M95 20l6 2-4 6-5-2z" fill="#8a8a8a"/>
            <path d="M22.500 24C30 36 106 36 113.500 24L102.500 106c-1.500 13-8 19-34.500 19s-32-6-33.500-19z" fill="url(#bin)"/>
            <path d="M34.500 106c15 9 53 9 68 0-1.500 13-8 19-34.500 19s-32-6-33.500-19z" fill="#f2f3f6"/>
            <path d="M57 52c14 0 27-4 33-14-3 14-17 20-33 14z" fill="#eee"/><circle cx="50" cy="82" r="9" fill="#e3cfcb" opacity=".4"/><circle cx="82" cy="60" r="12" fill="#e8d8d4" opacity=".35"/>
          </svg>
        </div>
      </div>
      <div class="file">
        <div class="thumb">ML</div>
        <div class="name"><span class="l1" v-fit="74">oyers-</span><span class="l2" v-fit="112">.-xml.xml</span></div>
      </div>
    </footer>
    <svg width="0" height="0" class="defs"><defs><radialGradient id="siriBg"><stop stop-color="#2b7fae"/><stop offset=".5" stop-color="#2a2a7c"/><stop offset="1" stop-color="#120c30"/></radialGradient></defs></svg>
  </div>
</template>

<style>
body { margin: 0; background: #000; }
</style>

<style scoped>
.desktop { width: 3360px; height: 2100px; overflow: hidden; background: #000; display: flex; flex-direction: column; font-family: Inter, sans-serif; white-space: nowrap; }
.desktop svg { display: block; flex: none; }
.desktop .defs { position: absolute; }
span, a { display: inline-block; flex: none; }

.menubar { height: 44px; margin-bottom: 2px; background: #acacac; color: #000; display: flex; align-items: center; font-size: 27px; flex: none; }
.apple { margin: -4px 0 0 42px; }
.menus { display: flex; margin-left: 40px; }
.bold { font-weight: 700; }
.status { display: flex; align-items: center; margin-left: auto; padding-right: 46px; }
.wifi { margin: -2px 0 0 19px; }
.pct { font-size: 22.500px; margin-left: 22px; }
.battery { margin-left: 8px; }
.clock { margin-left: 42px; }
.search { margin-left: 47px; }
.siri { margin-left: 34px; }
.list { margin-left: 24px; }

.window { height: 1892px; border-bottom: 2px solid #1d1d1d; border-radius: 10px; overflow: hidden; flex: none; background: #000; }
.tabstrip { height: 84px; background: #dfe1e6; box-shadow: inset 0 2px #ececef; display: flex; align-items: flex-end; }
.lights { display: flex; gap: 16px; margin: 0 6px 0 26px; align-self: center; }
.lights i { width: 24px; height: 24px; border-radius: 50%; box-sizing: border-box; border: 1px solid rgba(0, 0, 0, .14); margin-top: 2px; }
.red { background: #ed6a5f; }
.yellow { background: #f5bf4f; }
.green { background: #62c655; }
.tab { position: relative; width: 480px; height: 68px; margin-left: 20px; box-sizing: border-box; padding: 0 23px 0 26px; background: #fff; border-radius: 16px 16px 0 0; display: flex; align-items: center; color: #3c4043; font-size: 23px; }
.tab::before, .tab::after { content: ''; position: absolute; bottom: 0; width: 16px; height: 16px; }
.tab::before { left: -16px; background: radial-gradient(circle at 0 0, transparent 15.500px, #fff 16px); }
.tab::after { right: -16px; background: radial-gradient(circle at 100% 0, transparent 15.500px, #fff 16px); }
.tab-title { margin: 0 auto 0 18px; }
.plus { margin: 0 0 22px 32px; }

.toolbar { height: 72px; box-sizing: border-box; padding: 0 41px 0 31px; background: #fff; display: flex; align-items: center; }
.navi { margin-right: 38px; }
.omnibox { width: 2551px; height: 56px; margin-left: -7px; border-radius: 28px; background: #f1f3f4; display: flex; align-items: center; box-sizing: border-box; padding: 0 20px 0 23px; font-size: 27px; color: #5f6368; }
.url { margin: 0 auto 0 18px; }
.url b { font-weight: 400; color: #202124; }
.key { margin-right: 34px; }
.extensions { width: 223px; margin-left: 29px; display: flex; align-items: center; }
.tag { margin-left: 32px; }
.ring { margin-left: 33px; }
.puzzle { margin-left: 37px; }
.profile { width: 176px; height: 56px; margin: 0 33px 0 21px; box-sizing: border-box; border: 2px solid #2b66c6; border-radius: 28px; background: #edf2fa; display: flex; align-items: center; padding-left: 4px; color: #2b66c6; font-size: 27px; }
.avatar { width: 44px; height: 44px; line-height: 44px; border-radius: 50%; margin-right: 15px; background: #5d6bb9; color: #fff; text-align: center; font-size: 24px; }

.bookmarks { height: 66px; box-sizing: border-box; padding: 0 0 8px 31px; background: #fff; border-bottom: 2px solid #dadce0; display: flex; align-items: center; font-size: 23px; color: #3c4043; }
.apps { width: 135px; display: flex; align-items: center; gap: 18px; }
.bookmark { width: 308px; display: flex; align-items: center; gap: 16px; flex: none; }
.more { margin-left: 61px; }

.navbar { height: 152px; box-sizing: border-box; background: linear-gradient(#3c3c3c, #222); border-top: 2px solid #58585a; border-bottom: 2px solid #080808; display: flex; font-family: "Liberation Sans", Arial, sans-serif; font-size: 36.500px; line-height: 40px; color: #9d9d9d; text-shadow: 0 -2px rgba(0, 0, 0, .25); }
.links { display: flex; }
.left { margin: 28px 0 0 540px; }
.right { margin: 68px 0 0 413px; }

.page { padding: 50px 0 0 570px; font-family: "Liberation Sans", Arial, sans-serif; color: #fff; }
.page span, .page a { -webkit-text-stroke: .04em currentColor; }
h1 { margin: 0; font-size: 73px; line-height: 79px; font-weight: 400; }
h4 { margin: 99px 0 97px; font-size: 48.500px; line-height: 52.500px; font-weight: 400; display: flex; flex-direction: column; align-items: flex-start; }
.actions { display: flex; flex-direction: column; align-items: flex-start; gap: 40px; font-size: 61px; line-height: 66px; color: #457bb7; }

.bottom { height: 160px; display: flex; flex: none; }
.dock { width: 2724px; height: 160px; margin-left: 318px; padding: 0 8px; box-sizing: border-box; border-radius: 12px 12px 0 0; display: flex; background: radial-gradient(ellipse 420px 300px at 2724px 60px, #a2a2a2, #979797 40%, rgba(75, 75, 76, 0) 74%), radial-gradient(ellipse 700px 120px at 1150px 0, #494c57, rgba(75, 75, 76, 0)), #4b4b4c; }
.app { position: relative; width: 136px; height: 160px; padding-top: 8px; box-sizing: border-box; flex: none; }
.app svg { width: 136px; height: 136px; filter: drop-shadow(0 2px 2px rgba(0, 0, 0, .35)); }
.running::after { content: ''; position: absolute; left: 64px; bottom: 4px; width: 8px; height: 8px; border-radius: 50%; background: #000; }
.badge { position: absolute; left: 86px; top: 13px; width: 49px; height: 48px; border-radius: 50%; background: #e04d3f; color: #fff; font-weight: 400; font-size: 25px; line-height: 48px; text-align: center; box-shadow: 0 1px 3px rgba(0, 0, 0, .4); }
.petals { isolation: isolate; }
.petal { mix-blend-mode: multiply; opacity: .92; }
.divider { width: 62px; flex: none; display: flex; justify-content: center; }
.divider i { width: 2px; background: #161616; }
.short i { margin: 40px 0 40px 2px; }
.tall i { margin: 20px 0; background: #2c2c2c; }
.file { width: 318px; overflow: hidden; }
.thumb { width: 45px; height: 30px; box-sizing: border-box; background: linear-gradient(90deg, #707070, #929292); color: #4a4a4a; font-size: 19px; line-height: 33px; letter-spacing: -1px; text-indent: -7px; }
.name { display: flex; flex-direction: column; align-items: flex-start; margin-top: 20px; color: #f0f0f0; font-size: 23.500px; font-weight: 600; line-height: 32px; }
.l1 { margin-left: -7px; }
.l2 { margin-left: -3px; }
</style>
